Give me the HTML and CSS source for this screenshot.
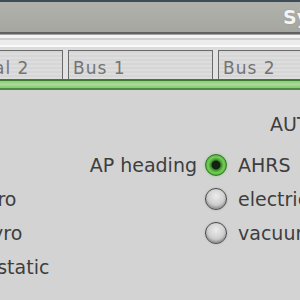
FILE: index.html
```html
<html>
<head>
  <title>System failures</title>
  <link rel="stylesheet" href="styles.css">
</head>
<body>
  <div class="window">
    <div class="titlebar">
      <span class="title">System failures</span>
    </div>
    <div class="toolbar"></div>

    <div class="tabs">
      <div class="tab">Electrical 2</div>
      <div class="tab">Bus 1</div>
      <div class="tab">Bus 2</div>
    </div>
    <div class="tabline"></div>

    <div class="panel">
      <div class="heading">AUTOPILOT</div>

      <div class="source"></div>
      <div class="label">AP heading</div>
      <div class="pick"><span class="radio on"></span></div>
      <div class="option">AHRS</div>

      <div class="source">electric gyro</div>
      <div class="label"></div>
      <div class="pick"><span class="radio"></span></div>
      <div class="option">electric</div>

      <div class="source">vacuum gyro</div>
      <div class="label"></div>
      <div class="pick"><span class="radio"></span></div>
      <div class="option">vacuum</div>

      <div class="source">pitot tube static</div>
      <div class="label"></div>
      <div class="pick"></div>
      <div class="option"></div>
    </div>
  </div>
</body>
</html>
```

FILE: styles.css
```css
body {
  margin: 0;
  background-color: #d3d3d3;
  font-family: "DejaVu Sans", sans-serif;
  overflow: hidden;
}

.window {
  width: 300px;
  height: 300px;
  overflow: hidden;
}

.titlebar {
  height: 30px;
  border-top: 2px solid #3e4c5a;
  border-bottom: 2px solid #626262;
  background: linear-gradient(#b2b2ac, #a6a6a0);
  padding-left: 283px;
  white-space: nowrap;
}

.title {
  color: #f4f4f4;
  font-weight: bold;
  font-size: 19px;
  line-height: 31px;
  text-shadow: 0 0 1px #777;
}

.toolbar {
  height: 16px;
  background: linear-gradient(#a4a4a4 0, #a4a4a4 1px, #f4f4f4 1px, #f4f4f4 4px,
    #cfcfcf 4px, #cfcfcf 6px, #ececec 6px, #ececec 11px, #fafafa 11px,
    #fafafa 13px, #dcdcdc 13px);
}

.tabs {
  display: flex;
  gap: 5px;
  margin-left: -82px;
  height: 29px;
  background-color: #e2e2e2;
}

.tab {
  box-sizing: border-box;
  width: 145px;
  height: 29px;
  flex-shrink: 0;
  border: 1.5px solid #6a6a6a;
  border-bottom: none;
  background: repeating-linear-gradient(#d6d6d6 0, #d6d6d6 2px, #dddddd 2px, #dddddd 4px);
  color: #747474;
  font-size: 17px;
  letter-spacing: 1px;
  line-height: 30px;
  padding: 2px 0 0 4px;
  white-space: nowrap;
}

.tabline {
  height: 7px;
  border-top: 2px solid #3f7a34;
  border-bottom: 2px solid #4e8c42;
  background: linear-gradient(#8ccc7c, #a6dc96 50%, #86c676);
}

.panel {
  display: grid;
  grid-template-columns: 182px 117px 40px auto;
  grid-template-rows: 58px;
  grid-auto-rows: 34px;
  margin-left: -102px;
  font-size: 19px;
  line-height: 34px;
  color: #3e3e3e;
  white-space: nowrap;
}

.heading {
  grid-column: 1 / 5;
  padding: 17px 0 0 372px;
}

.label {
  text-align: right;
}

.pick {
  display: flex;
  align-items: center;
  padding-left: 8px;
}

.option {
  padding-left: 1px;
}

.radio {
  width: 20px;
  height: 20px;
  border-radius: 50%;
  border: 1.5px solid #4a4a4a;
  background: radial-gradient(circle at 50% 35%, #ececec, #cacaca 60%, #a4a4a4);
  box-shadow: 0 0 2px #aaa, inset 0 -2px 2px #9a9a9a;
}

.radio.on {
  border-color: #3a6e2e;
  background: radial-gradient(circle, #142212 0, #142212 4px, #3f8a2e 5px, #70d254 8px, #4aa038 11px);
  box-shadow: 0 0 3px #9ad08a;
}
```
